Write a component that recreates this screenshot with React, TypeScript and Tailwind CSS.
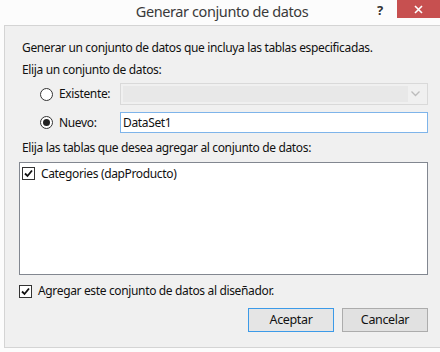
const Radio = ({ checked }: { checked?: boolean }) => (
  <span className="w-[13px] h-[13px] rounded-full border border-[#333] bg-white flex items-center justify-center shrink-0">
    {checked && <span className="w-[7px] h-[7px] rounded-full bg-[#222]" />}
  </span>
);

const Check = () => (
  <span className="w-[13px] h-[13px] border border-[#333] bg-white flex items-center justify-center shrink-0">
    <svg width="9" height="9" viewBox="0 0 9 9">
      <path d="M1 4.5 L3.5 7 L8 1.5" fill="none" stroke="#111" strokeWidth="1.8" />
    </svg>
  </span>
);

const App = () => {
  return (
    <div
      className="w-[440px] h-[352px] bg-[#fcfcfc] flex flex-col text-[12px] tracking-[-0.35px] text-[#111] overflow-hidden"
      style={{ fontFamily: '"Noto Sans", "Liberation Sans", sans-serif' }}
    >
      <div className="h-[25px] shrink-0 relative flex items-center justify-center">
        <span className="text-[14.5px] tracking-[-0.4px] text-[#3a3a3a] -mt-[1px] ml-[4px]">Generar conjunto de datos</span>
        <span className="absolute left-[377px] top-[1px] text-[13px] font-bold text-[#333]">?</span>
        <div className="absolute left-[397px] top-0 w-[43px] h-[18px] bg-[#c75050] flex items-center justify-center">
          <svg width="9" height="9" viewBox="0 0 9 9">
            <path d="M1 1 L8 8 M8 1 L1 8" stroke="#fff" strokeWidth="1.6" />
          </svg>
        </div>
      </div>

      <div className="ml-[4px] h-[323px] border-l border-t border-b border-[#d4d4d4] bg-[#f0f0f0] pl-[17px] pt-[14px] flex flex-col">
        <div className="h-[16px] leading-[16px]">Generar un conjunto de datos que incluya las tablas especificadas.</div>
        <div className="h-[16px] leading-[16px] mt-[6px]">Elija un conjunto de datos:</div>

        <div className="mt-[5px] flex items-center h-[22px]">
          <div className="w-[98px] pl-[18px] flex items-center gap-[6px]">
            <Radio />
            <span>Existente:</span>
          </div>
          <div className="w-[308px] h-[22px] border border-[#d9d9d9] bg-[#f0f0f0] flex items-center pl-[2px]">
            <div className="w-[285px] h-[16px] bg-[#e8e8e8]" />
            <svg className="ml-[3px]" width="9" height="6" viewBox="0 0 9 6">
              <path d="M0.5 0.5 L4.5 4.5 L8.5 0.5" fill="none" stroke="#bcbcbc" strokeWidth="1.3" />
            </svg>
          </div>
        </div>

        <div className="mt-[7px] flex items-center h-[21px]">
          <div className="w-[98px] pl-[18px] flex items-center gap-[6px]">
            <Radio checked />
            <span>Nuevo:</span>
          </div>
          <div className="w-[308px] h-[21px] border border-[#7eb4ea] bg-white flex items-center pl-[2px]">
            DataSet1
          </div>
        </div>

        <div className="h-[16px] leading-[16px] mt-[7px]">Elija las tablas que desea agregar al conjunto de datos:</div>

        <div className="mt-[6px] -ml-[3px] w-[409px] h-[113px] border border-[#828790] bg-white pt-[4px] pl-[2px]">
          <div className="flex items-center gap-[6px] h-[13px]">
            <Check />
            <span>Categories (dapProducto)</span>
          </div>
        </div>

        <div className="mt-[8px] -ml-[3px] flex items-center gap-[6px] h-[16px]">
          <Check />
          <span>Agregar este conjunto de datos al diseñador.</span>
        </div>

        <div className="mt-[9px] flex justify-end gap-[8px] w-[406px]">
          <button className="w-[86px] h-[24px] border border-[#3c9ae8] bg-[#e5e5e5] text-[12.5px]">Aceptar</button>
          <button className="w-[86px] h-[24px] border border-[#acacac] bg-[#e1e1e1] text-[12.5px]">Cancelar</button>
        </div>
      </div>
    </div>
  );
};

export default App;
